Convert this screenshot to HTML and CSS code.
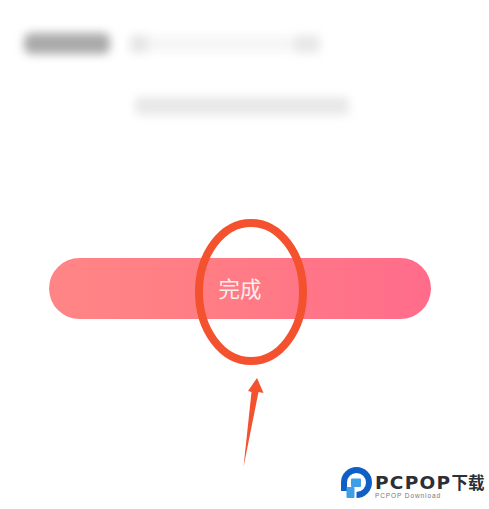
FILE: index.html
```html
<!DOCTYPE html>
<html lang="zh">
<head>
<meta charset="utf-8">
<title>完成</title>
<link rel="stylesheet" href="styles.css">
</head>
<body>
<main class="page">
  <div class="blur-row">
    <span class="blur-label"></span>
    <span class="blur-dot"></span>
    <span class="blur-line"></span>
    <span class="blur-end"></span>
  </div>
  <div class="blur-sub"></div>
  <button class="done">完成</button>
</main>

<svg class="mark" viewBox="0 0 489 509" aria-hidden="true">
  <ellipse cx="251" cy="292" rx="52" ry="69" fill="none" stroke="#f4512f" stroke-width="8"/>
  <path d="M243.500 467 L251.500 392 L248 391 L257 378 L263.500 393 L258.500 392 Z" fill="#f4512f"/>
</svg>

<div class="brand">
  <svg class="brand-icon" viewBox="0 0 33 34" aria-hidden="true">
    <path d="M7 25 L1 25 L1 16.500 A15.500 15.500 0 1 1 16.500 32 L16.500 26 A9.500 9.500 0 1 0 7 16.500 Z" fill="#0f5fc4"/>
    <rect x="11" y="12.500" width="10" height="8.500" rx="1" fill="#3f9fe6"/>
    <rect x="6.500" y="21" width="8" height="11" rx="1" fill="#3f9fe6"/>
  </svg>
  <div class="brand-text">
    <div class="brand-name"><span class="brand-latin">PCPOP</span><span class="brand-cjk">下载</span></div>
    <div class="brand-sub">PCPOP Download</div>
  </div>
</div>
</body>
</html>
```
FILE: styles.css
```css
* { box-sizing: border-box; }
html, body { margin: 0; height: 100%; }
body {
  width: 489px;
  height: 509px;
  background: #fff;
  overflow: hidden;
  position: relative;
  font-family: "Liberation Sans", "Noto Sans CJK SC", sans-serif;
}
.page {
  display: flex;
  flex-direction: column;
  padding: 33px 49px 0 24px;
}
.blur-row {
  display: flex;
  align-items: center;
  height: 21px;
  filter: blur(5px);
}
.blur-label {
  width: 86px;
  height: 21px;
  border-radius: 7px;
  background: #aaa;
}
.blur-dot {
  width: 18px;
  height: 18px;
  margin-left: 20px;
  background: #e6e6e6;
  border-radius: 4px;
}
.blur-line {
  width: 146px;
  height: 16px;
  background: #f6f6f6;
}
.blur-end {
  width: 26px;
  height: 18px;
  background: #e8e8e8;
  border-radius: 4px;
}
.blur-sub {
  width: 214px;
  height: 18px;
  margin: 43px 0 0 111px;
  background: #e8e8e8;
  border-radius: 4px;
  filter: blur(5px);
}
.done {
  width: 382px;
  height: 61px;
  margin: 143px 0 0 25px;
  border: 0;
  border-radius: 31px;
  padding: 0 0 3px 0;
  background: linear-gradient(90deg, #ff8585 0%, #ff7b85 50%, #ff6c8b 100%);
  color: #fdeeee;
  font: 400 21.500px "Noto Sans CJK SC", sans-serif;
}
.mark {
  position: absolute;
  left: 0;
  top: 0;
  width: 489px;
  height: 509px;
}
.brand {
  position: absolute;
  left: 340px;
  top: 466px;
  display: flex;
  align-items: flex-start;
  gap: 2px;
}
.brand-icon {
  width: 33px;
  height: 34px;
}
.brand-text {
  display: flex;
  flex-direction: column;
  padding-top: 7px;
}
.brand-name {
  display: flex;
  align-items: center;
  height: 19px;
  white-space: nowrap;
  color: #2b2f36;
}
.brand-latin {
  font: 700 18.500px/19px "DejaVu Sans", sans-serif;
  letter-spacing: 1.300px;
}
.brand-cjk {
  font: 700 16.500px/19px "Noto Sans CJK SC", sans-serif;
}
.brand-sub {
  font: 400 6.500px/7px "Liberation Sans", sans-serif;
  letter-spacing: 0.900px;
  color: #777;
  white-space: nowrap;
}
```
